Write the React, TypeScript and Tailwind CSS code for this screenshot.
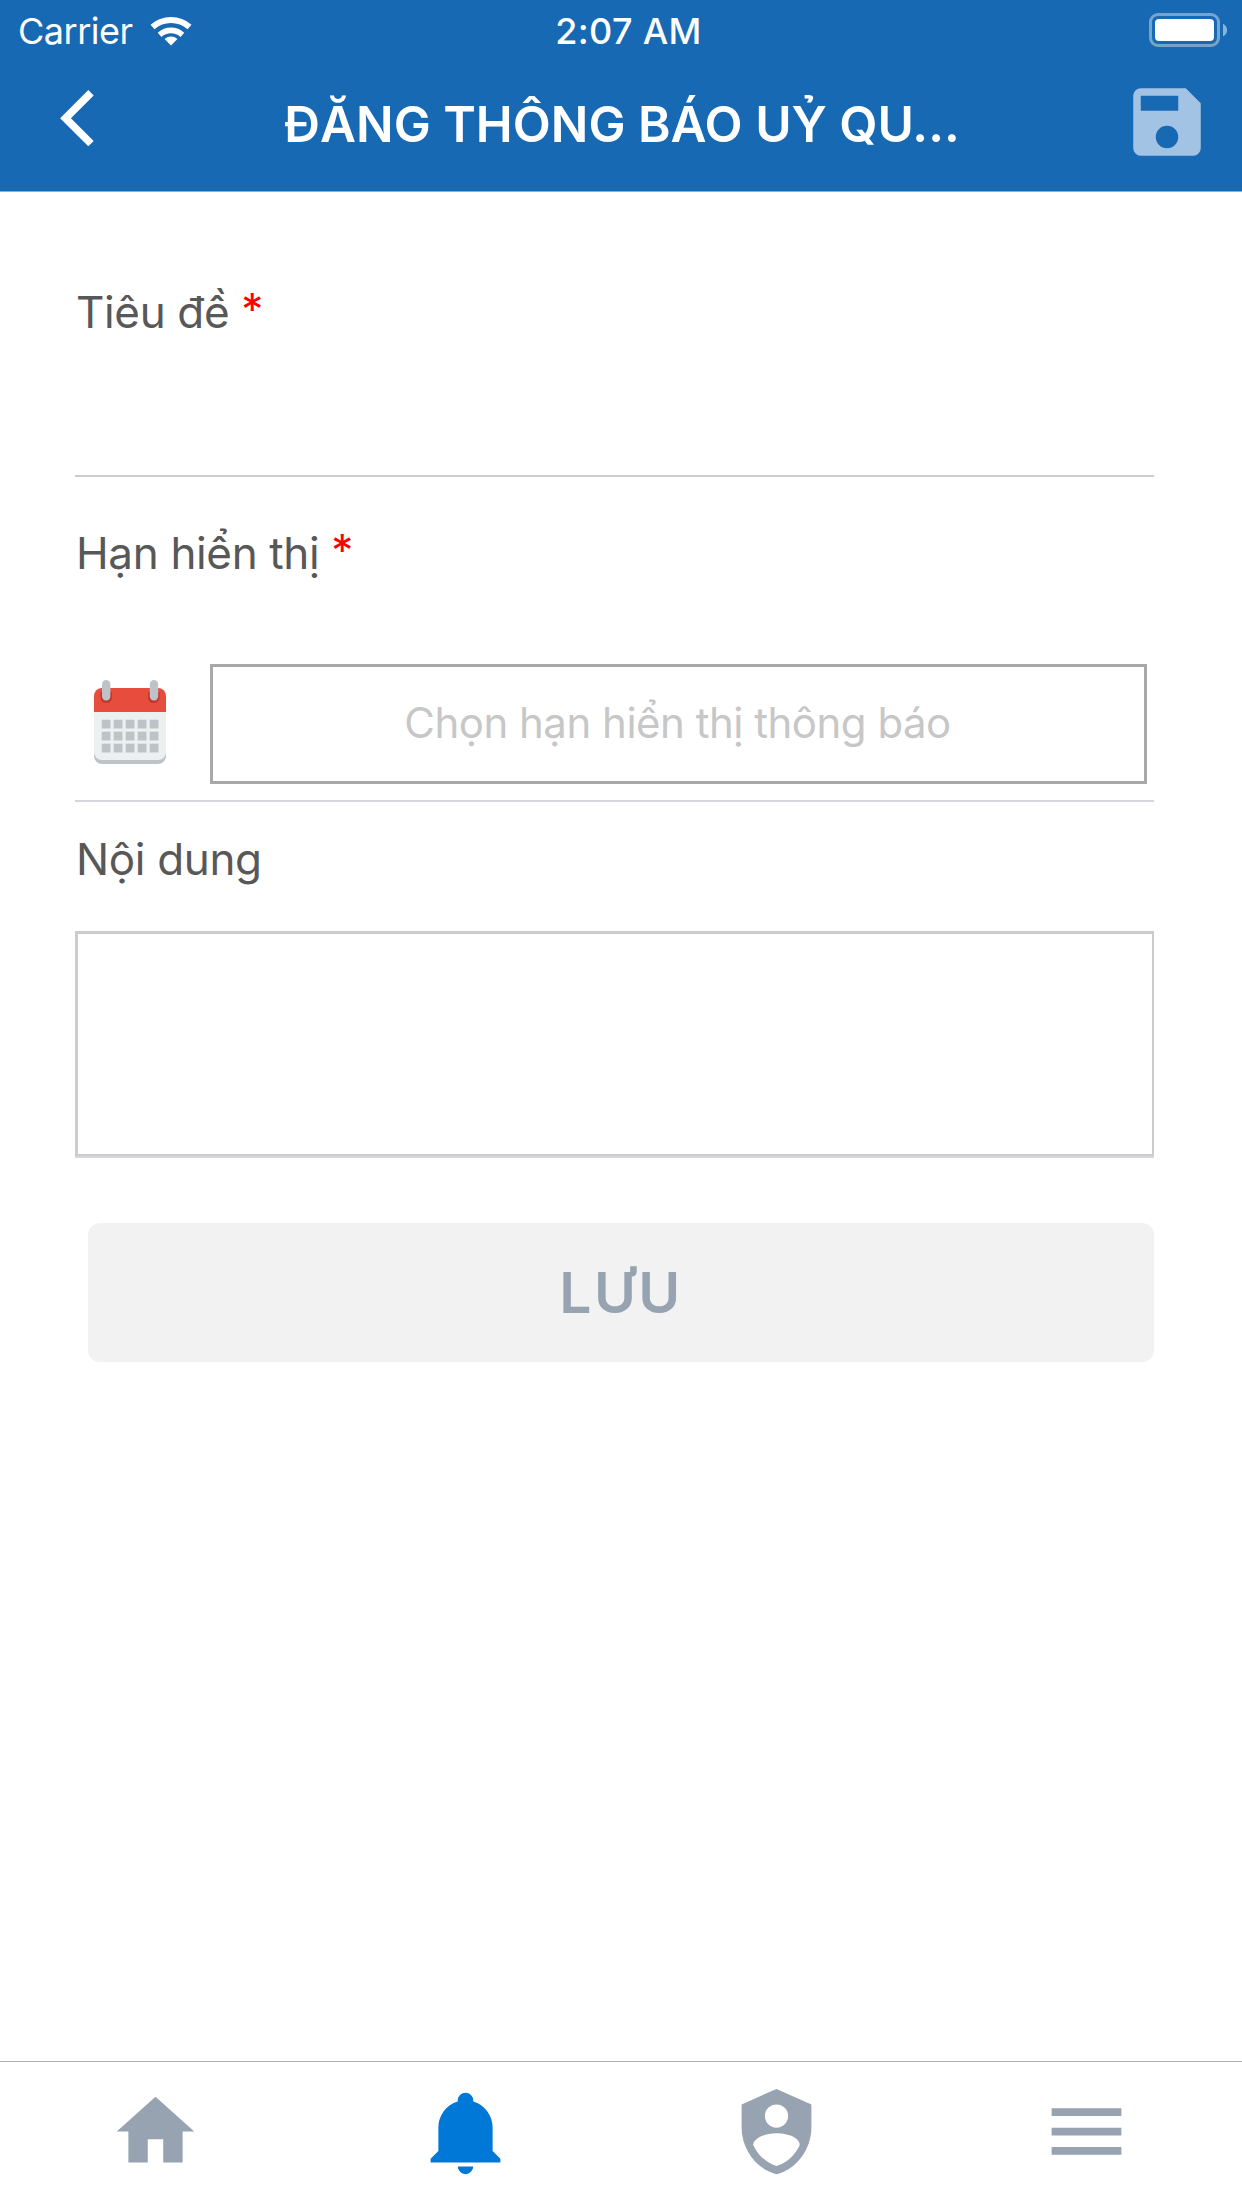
const columns = [0, 1, 2, 3, 4];
const rows = [0, 1, 2];

function WifiIcon() {
  return (
    <svg className="ml-[16px] h-[32px] w-[44px]" viewBox="0 0 44 32" fill="none">
      <path d="M3.5 12A28 28 0 0 1 40.5 12" stroke="#fff" strokeWidth="6" />
      <path d="M10.6 19.8A17 17 0 0 1 33.4 19.8" stroke="#fff" strokeWidth="5.6" />
      <path d="M22 30.500L15.6 24A9.5 9.5 0 0 1 28.4 24Z" fill="#fff" />
    </svg>
  );
}

function BatteryIcon() {
  return (
    <svg className="mb-[2px] h-[34px] w-[80px]" viewBox="0 0 80 34" fill="none">
      <rect x="1.5" y="1.5" width="68" height="31" rx="7.5" stroke="#74a5d1" strokeWidth="3" />
      <rect x="6" y="6" width="59" height="22" rx="4" fill="#fff" />
      <path d="M74 10.7C76.7 12 78.1 14.4 78.1 17S76.7 22 74 23.3Z" fill="#8bb4d9" />
    </svg>
  );
}

function CalendarIcon() {
  return (
    <svg className="h-[84px] w-[72px]" viewBox="0 0 72 84">
      <path d="M0 30H72V76A8 8 0 0 1 64 84H8A8 8 0 0 1 0 76Z" fill="#bdc3c7" />
      <path d="M0 30H72V72A8 8 0 0 1 64 80H8A8 8 0 0 1 0 72Z" fill="#ecf0f1" />
      <path d="M0 32V16A8 8 0 0 1 8 8H64A8 8 0 0 1 72 16V32Z" fill="#e84c3d" />
      <path d="M6.5 18A5.8 5.8 0 0 0 18 18V12H6.5ZM54 18A5.8 5.8 0 0 0 65.500 18V12H54Z" fill="#c0392b" />
      <rect x="8" y="0" width="8.400" height="20.500" rx="4.200" fill="#bdc3c7" />
      <rect x="55.800" y="0" width="8.400" height="20.500" rx="4.200" fill="#bdc3c7" />
      {rows.map((r) =>
        columns.map((c) => (
          <rect key={`${r}-${c}`} x={7.7 + c * 12} y={39.7 + r * 12} width="8.800" height="8.800" fill="#bdc3c7" />
        )),
      )}
    </svg>
  );
}

function Label({ text, required = false }: { text: string; required?: boolean }) {
  return (
    <div className="flex h-[60px] items-center pl-px text-[44px] leading-[60px] tracking-[-0.35px] text-[#585858]">
      <span>{text}</span>
      {required && <span className="mb-[7px] ml-[12px] text-[#ff0000]">*</span>}
    </div>
  );
}

const tabs = [
  { name: "home", color: "text-[#97a3b0]", d: "M10 20V14H14V20H19V12H22L12 3L2 12H5V20H10Z" },
  {
    name: "notifications",
    color: "text-[#0078d7]",
    d: "M21 19V20H3V19L5 17V11C5 7.9 7.03 5.17 10 4.29V4A2 2 0 0 1 14 4V4.29C16.97 5.17 19 7.9 19 11V17L21 19M14 21A2 2 0 0 1 12 23A2 2 0 0 1 10 21",
  },
  {
    name: "account",
    color: "text-[#97a3b0]",
    d: "M12 1L3 5V11C3 16.55 6.84 21.74 12 23C17.16 21.74 21 16.55 21 11V5L12 1M12 5A3 3 0 0 1 15 8A3 3 0 0 1 12 11A3 3 0 0 1 9 8A3 3 0 0 1 12 5M17.13 17C15.92 18.85 14.11 20.24 12 20.93C9.89 20.24 8.08 18.85 6.87 17C6.53 16.5 6.24 16 6 15.47C6 13.82 8.71 12.47 12 12.47C15.29 12.47 18 13.79 18 15.47C17.76 16 17.47 16.5 17.13 17Z",
  },
  { name: "menu", color: "text-[#97a3b0]", d: "M3 6H21V8H3V6M3 11H21V13H3V11M3 16H21V18H3V16Z" },
];

export default function App() {
  return (
    <div className="flex h-[2208px] w-[1242px] flex-col overflow-hidden bg-white font-['Inter',sans-serif]">
      <header className="h-[192px] shrink-0 border-b border-[#a7a7aa] bg-[#1769b3] text-white">
        <div className="grid h-[62px] grid-cols-3 items-center text-[36px] leading-[62px]">
          <div className="flex items-center pl-[18px]">
            <span className="tracking-[-0.5px]">Carrier</span>
            <WifiIcon />
          </div>
          <span className="pl-[15px] text-center font-medium tracking-[0.3px]">2:07 AM</span>
          <div className="flex justify-end pr-[13px]">
            <BatteryIcon />
          </div>
        </div>
        <div className="flex h-[124px] items-center justify-between">
          <button className="mb-[12px] ml-[60px] w-[162px]" aria-label="Back">
            <svg className="h-[56px] w-[34px]" viewBox="0 0 34 56" fill="none">
              <path d="M31 2.800L5.500 28.200L31 53.600" stroke="#fff" strokeWidth="7.600" />
            </svg>
          </button>
          <h1 className="text-[49.5px] font-semibold leading-[124px]">ĐĂNG THÔNG BÁO UỶ QU...</h1>
          <button className="mb-[4px] mr-[30px] flex w-[190px] justify-end" aria-label="Save">
            <svg className="h-[90px] w-[90px]" viewBox="0 0 24 24" fill="#a2c3e3">
              <path d="M17 3H5A2 2 0 0 0 3 5V19A2 2 0 0 0 5 21H19A2 2 0 0 0 21 19V7L17 3M12 19A3 3 0 0 1 9 16A3 3 0 0 1 12 13A3 3 0 0 1 15 16A3 3 0 0 1 12 19M15 9H5V5H15V9Z" />
            </svg>
          </button>
        </div>
      </header>

      <main className="flex flex-1 flex-col pl-[75px] pr-[88px] pt-[90px]">
        <section className="h-[195px] shrink-0 border-b-2 border-[#cccccc]">
          <Label text="Tiêu đề" required />
        </section>
        <section className="mt-[46px] h-[279px] shrink-0 border-b-2 border-[#d6d7dc]">
          <Label text="Hạn hiển thị" required />
          <div className="mt-[81px] flex h-[120px] items-start pl-[19px]">
            <div className="mt-[16px]">
              <CalendarIcon />
            </div>
            <div className="ml-[44px] h-[120px] w-[937px] border-[3px] border-[#a9a9a9] pr-[2px] text-center text-[42px] leading-[112px] tracking-[-0.5px] text-[#c7c7c7]">
              Chọn hạn hiển thị thông báo
            </div>
          </div>
        </section>
        <section className="mt-[27px] shrink-0">
          <Label text="Nội dung" />
          <div className="mt-[42px] border-b-2 border-[#d6d7dc]">
            <div className="h-[225px] border-b-2 border-l-[3px] border-r-2 border-t-[3px] border-[#cccccc]" />
          </div>
        </section>
        <button className="ml-[13px] mt-[65px] h-[139px] shrink-0 rounded-[12px] bg-[#f2f2f2] text-[57px] font-semibold leading-[139px] tracking-[2.5px] text-[#97a3b0]">
          LƯU
        </button>
      </main>

      <nav className="grid h-[147px] shrink-0 grid-cols-4 justify-items-center border-t border-[#b2b2b2] pt-[23px]">
        {tabs.map((tab) => (
          <svg key={tab.name} className={"h-[93px] w-[93px] " + tab.color} viewBox="0 0 24 24" fill="currentColor">
            <path d={tab.d} fillRule="evenodd" />
          </svg>
        ))}
      </nav>
    </div>
  );
}
